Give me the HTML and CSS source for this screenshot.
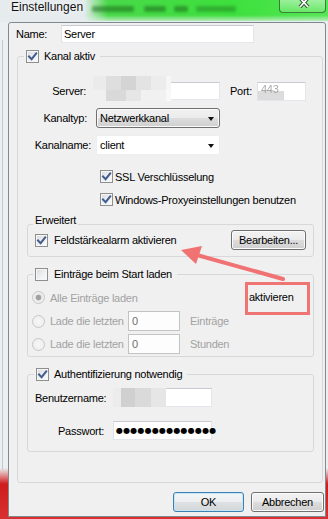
FILE: index.html
```html
<!DOCTYPE html>
<html lang="de">
<head>
<meta charset="utf-8">
<title>Einstellungen</title>
<link rel="stylesheet" href="styles.css">
</head>
<body>
<div class="screen">
  <div class="titlebar">
    <span class="title">Einstellungen</span>
    <div class="glow">
      <span class="smudge s1"></span><span class="smudge s2"></span><span class="smudge s3"></span><span class="smudge s4"></span>
      <div class="close">
        <svg width="12" height="8" viewBox="0 0 12 8"><path d="M2 -2 L10 7 M10 -2 L2 7" stroke="#2c4a2c" stroke-width="3.6" fill="none"/><path d="M2 -2 L10 7 M10 -2 L2 7" stroke="#ffffff" stroke-width="1.8" fill="none"/></svg>
      </div>
    </div>
  </div>
  <div class="client">
    <div class="name-row">
      <span class="name-label">Name:</span>
      <div class="textbox name-box">Server</div>
    </div>
    <fieldset class="group main">
      <legend class="cb-legend lg-main"><span class="cb on"><svg viewBox="0 0 11 11"><path d="M2 5.5 L4.6 8.2 L9.2 2.4"/></svg></span><span>Kanal aktiv</span></legend>
      <div class="frow r-server">
        <span class="flabel pr5">Server:</span>
        <div class="textbox server-box"><span class="pix"></span></div>
        <span class="port-label">Port:</span>
        <div class="textbox port-box"><span class="blurred">443</span></div>
      </div>
      <div class="frow r-typ">
        <span class="flabel pr4">Kanaltyp:</span>
        <div class="dropbtn"><span>Netzwerkkanal</span><span class="caret"></span></div>
      </div>
      <div class="frow r-kname">
        <span class="flabel">Kanalname:</span>
        <div class="combo"><span>client</span><span class="caret"></span></div>
      </div>
      <div class="crow tight r-ssl"><span class="cb on"><svg viewBox="0 0 11 11"><path d="M2 5.5 L4.6 8.2 L9.2 2.4"/></svg></span><span>SSL Verschlüsselung</span></div>
      <div class="crow tight r-proxy"><span class="cb on"><svg viewBox="0 0 11 11"><path d="M2 5.5 L4.6 8.2 L9.2 2.4"/></svg></span><span>Windows-Proxyeinstellungen benutzen</span></div>

      <fieldset class="group sub erw">
        <legend class="text-legend">Erweitert</legend>
        <div class="erw-row">
          <div class="crow"><span class="cb on"><svg viewBox="0 0 11 11"><path d="M2 5.5 L4.6 8.2 L9.2 2.4"/></svg></span><span>Feldstärkealarm aktivieren</span></div>
          <div class="btn bearb">Bearbeiten...</div>
        </div>
      </fieldset>

      <fieldset class="group sub eintr">
        <legend class="cb-legend lg-sub"><span class="cb"></span><span>Einträge beim Start laden</span></legend>
        <div class="rrow r1"><span class="radio sel"></span><span>Alle Einträge laden</span></div>
        <div class="rrow r2"><span class="radio"></span><span class="rlabel">Lade die letzten</span><div class="textbox num">0</div><span>Einträge</span></div>
        <div class="rrow r3"><span class="radio"></span><span class="rlabel">Lade die letzten</span><div class="textbox num">0</div><span>Stunden</span></div>
      </fieldset>

      <fieldset class="group sub auth">
        <legend class="cb-legend lg-auth"><span class="cb on"><svg viewBox="0 0 11 11"><path d="M2 5.5 L4.6 8.2 L9.2 2.4"/></svg></span><span>Authentifizierung notwendig</span></legend>
        <div class="arow a1"><span class="alabel">Benutzername:</span><div class="textbox abox"><span class="pix2"></span></div></div>
        <div class="arow a2"><span class="alabel pw">Passwort:</span><div class="textbox abox dots">●●●●●●●●●●●●●●</div></div>
      </fieldset>
    </fieldset>
    <div class="buttons">
      <div class="btn ok">OK</div>
      <div class="btn cancel">Abbrechen</div>
    </div>
  </div>

  <svg class="arrow" width="328" height="519" viewBox="0 0 328 519">
    <line x1="283" y1="279" x2="197" y2="255" stroke="#f07272" stroke-width="4" stroke-linecap="round"/>
    <polygon points="181,250 202,246 196,264" fill="#f07272"/>
  </svg>
  <div class="callout">aktivieren</div>
</div>
</body>
</html>
```

FILE: styles.css
```css
* { box-sizing: border-box; }
html, body { margin: 0; padding: 0; }
body {
  width: 328px;
  height: 519px;
  overflow: hidden;
  font-family: "Liberation Sans", Arial, sans-serif;
  font-size: 11px;
  letter-spacing: -0.25px;
  color: #000;
}
.screen {
  position: relative;
  width: 328px;
  height: 519px;
  overflow: hidden;
  background:
    linear-gradient(to right, transparent 2px, #c4c8cc 2px, #c4c8cc 3px, transparent 3px) 0 40px / 8px 430px no-repeat,
    linear-gradient(to bottom, #eceff1 0, #eceff1 468px, #cf1c1c 484px, #d83030 519px);
}

/* title bar */
.titlebar {
  display: flex;
  height: 22px;
  background: #e6ebee;
}
.title {
  width: 84px;
  padding: 1px 0 0 11px;
  font-size: 12px;
  line-height: 13px;
  letter-spacing: 0;
  color: #111;
  white-space: nowrap;
  text-shadow: 0 0 5px #fff;
}
.glow {
  flex: 1;
  display: flex;
  align-items: flex-start;
  height: 21px;
  background:
    linear-gradient(to bottom, rgba(255,255,255,0) 0, rgba(255,255,255,0) 15px, rgba(230,240,235,0.7) 21px),
    linear-gradient(to right, rgba(70,220,70,0) 0, #49d949 24px, #3de03d 150px, #55e655 100%);
}
.smudge {
  height: 6px;
  margin-top: 6px;
  background: rgba(25, 105, 25, 0.55);
  filter: blur(1.6px);
  border-radius: 2px;
}
.s1 { width: 42px; margin-left: 8px; }
.s2 { width: 22px; margin-left: 10px; }
.s3 { width: 14px; margin-left: 8px; }
.s4 { width: 40px; margin-left: 8px; opacity: 0.7; }
.close {
  margin-left: auto;
  margin-right: 2px;
  width: 47px;
  height: 13px;
  border: 1px solid rgba(35, 85, 35, 0.75);
  border-top: none;
  border-radius: 0 0 4px 4px;
  background: linear-gradient(to bottom, rgba(255,255,255,0.45), rgba(255,255,255,0.15));
  display: flex;
  justify-content: center;
  padding-left: 2px;
}
.close svg { display: block; }

/* client area */
.client {
  margin-left: 8px;
  width: 318px;
  height: 495px;
  border: 1px solid #7f8a90;
  border-radius: 3px 3px 0 0;
  background: #f0f0f0;
}
.name-row {
  display: flex;
  align-items: center;
  height: 18px;
  margin-top: 2px;
  padding-left: 7px;
}
.name-label { width: 45px; }
.textbox {
  background: #fff;
  border: 1px solid;
  border-color: #c8cbd2 #e3e7ec #e3e7ec #e0e2e8;
}
.name-box {
  width: 193px;
  height: 18px;
  padding-left: 2px;
  line-height: 16px;
}

/* group boxes */
.group {
  margin: 0;
  padding: 0;
  min-width: 0;
  border: 1px solid #d6d9dc;
  border-radius: 3px;
}
.main {
  margin: 6px 2px 0 8px;
  padding-bottom: 30px;
}
.cb-legend {
  display: flex;
  align-items: center;
  gap: 5px;
  height: 14px;
  line-height: 14px;
  padding: 0 5px 0 2px;
  white-space: nowrap;
}
.lg-main { margin-left: 6px; }
.lg-sub { margin-left: 5px; height: 13px; line-height: 13px; gap: 6px; }
.lg-auth { margin-left: 6px; height: 13px; line-height: 13px; gap: 5px; }
.text-legend {
  margin-left: 5px;
  padding: 0 2px 7px 2px;
  line-height: 13px;
}
.sub { margin: 0 8px 0 9px; }

/* checkbox */
.cb {
  flex: none;
  width: 13px;
  height: 13px;
  border: 1px solid #8e8f8f;
  background: linear-gradient(135deg, #d8dade 0, #eef0f2 55%, #fbfbfb 100%);
  box-shadow: inset 0 0 0 1px #f6f6f6;
  display: block;
}
.cb svg { display: block; width: 11px; height: 11px; }
.cb svg path {
  fill: none;
  stroke: #425c8e;
  stroke-width: 2;
  stroke-linecap: square;
}

/* form rows */
.frow { display: flex; align-items: center; }
.flabel { width: 73px; text-align: right; white-space: nowrap; }
.pr5 { padding-right: 5px; }
.pr4 { padding-right: 4px; }
.r-server { margin-top: 19px; height: 18px; }
.r-typ { margin-top: 8px; height: 20px; }
.r-kname { margin-top: 7px; height: 20px; }
.server-box {
  position: relative;
  margin-left: 5px;
  width: 124px;
  height: 18px;
}
.pix {
  position: absolute;
  left: -4px;
  top: -7px;
  width: 78px;
  height: 25px;
  background:
    linear-gradient(to right, #ebebeb 0, #ebebeb 13px, #dedede 13px, #dedede 28px, #d4d4d4 28px, #d4d4d4 43px, #e3e3e3 43px, #e3e3e3 58px, #ececec 58px, #ececec 73px, #f6f6f6 73px) 0 0 / 100% 14px no-repeat,
    linear-gradient(to right, #f0f0f0 0, #f0f0f0 13px, #d9d9d9 13px, #d9d9d9 33px, #e6e6e6 33px, #e6e6e6 48px, #f1f1f1 48px, #f1f1f1 73px, #f8f8f8 73px) 0 14px / 100% 11px no-repeat;
}
.port-label { margin-left: 10px; width: 27px; }
.port-box {
  width: 49px;
  height: 19px;
  padding-left: 3px;
  line-height: 12px;
  background: linear-gradient(to right, #dcdcdc 0, #dcdcdc 26px, #fff 26px) 0 8px / 100% 11px no-repeat, #fff;
}
.blurred { color: #a9a9a9; filter: blur(0.7px); }
.dropbtn, .combo {
  margin-left: 5px;
  width: 124px;
  height: 20px;
  display: flex;
  align-items: center;
  padding: 0 5px 0 3px;
}
.dropbtn {
  border: 1px solid #707070;
  border-radius: 3px;
  background: linear-gradient(to bottom, #f2f2f2 0, #ebebeb 50%, #dddddd 50%, #cfcfcf 100%);
  box-shadow: inset 0 0 0 1px #fafafa;
}
.combo {
  background: #fff;
  border: 1px solid #eceef1;
}
.caret {
  margin-left: auto;
  width: 0;
  height: 0;
  border-left: 3.5px solid transparent;
  border-right: 3.5px solid transparent;
  border-top: 4px solid #111;
  margin-top: 1px;
}
.crow { display: flex; align-items: center; gap: 6px; white-space: nowrap; }
.tight { gap: 2px; padding-left: 82px; height: 13px; }
.r-ssl { margin-top: 15px; }
.r-proxy { margin-top: 10px; }

/* Erweitert */
.erw { margin-top: 8px; padding-bottom: 6px; }
.erw-row {
  display: flex;
  justify-content: space-between;
  align-items: center;
  height: 20px;
  margin-top: -4px;
  padding: 0 7px;
}
.btn {
  height: 20px;
  border: 1px solid #707070;
  border-radius: 3px;
  background: linear-gradient(to bottom, #f2f2f2 0, #ebebeb 50%, #dddddd 50%, #cfcfcf 100%);
  box-shadow: inset 0 0 0 1px #fbfbfb;
  display: flex;
  align-items: center;
  justify-content: center;
  white-space: nowrap;
}
.bearb { width: 75px; }

/* Einträge */
.eintr { margin-top: 11px; padding-bottom: 2px; }
.rrow {
  display: flex;
  align-items: center;
  padding-left: 4px;
  color: #a2a2a2;
  white-space: nowrap;
}
.radio {
  flex: none;
  width: 13px;
  height: 13px;
  margin-right: 5px;
  border: 1px solid #c6c6c6;
  border-radius: 50%;
  background: radial-gradient(circle at 50% 50%, #f6f6f6 0, #ececec 100%);
}
.radio.sel {
  background: radial-gradient(circle at 50% 50%, #9c9c9c 0, #a6a6a6 2.5px, #e6e6e6 3.2px, #f5f5f5 6px);
}
.r1 { margin-top: 10px; height: 13px; }
.r2 { margin-top: 7px; height: 20px; }
.r3 { margin-top: 3px; height: 20px; }
.rlabel { width: 78px; }
.num {
  width: 52px;
  height: 20px;
  margin-right: 10px;
  padding-left: 3px;
  line-height: 18px;
  color: #6d6d6d;
  border: 1px solid #c3c3c3;
  background: #fdfdfd;
}

/* Authentifizierung */
.auth { margin-top: 11px; padding-bottom: 11px; }
.arow { display: flex; align-items: center; padding-left: 7px; height: 19px; }
.a1 { margin-top: 7px; }
.a2 { margin-top: 14px; }
.alabel { width: 78px; white-space: nowrap; }
.alabel.pw { padding-left: 23px; }
.abox {
  position: relative;
  width: 99px;
  height: 19px;
}
.pix2 {
  position: absolute;
  left: -1px;
  top: -1px;
  width: 53px;
  height: 19px;
  background: linear-gradient(to right, #ececec 0, #ececec 8px, #d0d0d0 8px, #d0d0d0 22px, #dadada 22px, #dadada 38px, #e6e6e6 38px, #e6e6e6 53px);
}
.dots {
  white-space: nowrap;
  padding-left: 2px;
  font-family: "DejaVu Sans", sans-serif;
  font-size: 8px;
  line-height: 17px;
  letter-spacing: 0.2px;
}

/* buttons */
.buttons {
  display: flex;
  justify-content: flex-end;
  gap: 7px;
  margin-top: 9px;
  padding-right: 1px;
}
.ok {
  width: 71px;
  border-color: #3c7fb1;
  box-shadow: inset 0 0 0 1px #c4e6f7;
  background: linear-gradient(to bottom, #f3f6f8 0, #eceef0 50%, #dfe2e5 50%, #d3d6d9 100%);
}
.cancel { width: 73px; }

/* annotations */
.arrow {
  position: absolute;
  left: 0;
  top: 0;
  pointer-events: none;
}
.callout {
  position: absolute;
  left: 245px;
  top: 282px;
  width: 65px;
  height: 33px;
  border: 3px solid #ef7474;
  padding: 6px 0 0 1px;
  line-height: 13px;
  white-space: nowrap;
}
```
